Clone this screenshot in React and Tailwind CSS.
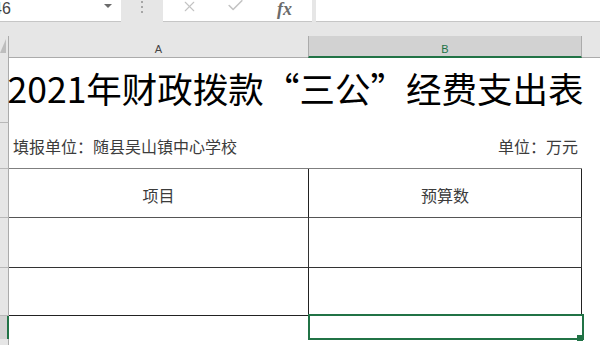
import React from "react";
import { X, Check } from "lucide-react";

const cjk = "font-['Noto_Sans_CJK_SC',sans-serif]";

const Dots = () => (
  <div className="flex w-[42px] flex-col items-center gap-[3px] pt-[1px]">
    <span className="h-[2px] w-[2px] bg-[#a6a6a6]" />
    <span className="h-[2px] w-[2px] bg-[#a6a6a6]" />
    <span className="h-[2px] w-[2px] bg-[#a6a6a6]" />
  </div>
);

const FormulaBar = () => (
  <div className="flex h-[22px] bg-[#e6e6e6]">
    <div className="flex h-[22px] w-[121px] items-start justify-between overflow-hidden border-b border-[#c6c6c6] bg-white">
      <span className="-ml-[7px] -mt-[3px] font-['Liberation_Sans',sans-serif] text-[16px] text-[#444]">46</span>
      <svg width="8" height="5" viewBox="0 0 8 5" className="mr-[9px] mt-[4px]">
        <path d="M0 0 L8 0 L4 4 Z" fill="#6b6b6b" />
      </svg>
    </div>
    <Dots />
    <div className="flex h-[22px] w-[149px] items-start border-b border-[#c6c6c6] bg-white">
      <X size={17} strokeWidth={1.5} color="#c3c3c3" className="ml-[18px] -mt-[2px]" />
      <Check size={19} strokeWidth={2} color="#c3c3c3" className="ml-[28px] -mt-[4px]" />
      <span className="ml-[32px] -mt-[4px] font-['Liberation_Serif',serif] text-[18px] font-bold italic text-[#6b6b6b]">fx</span>
    </div>
    <div className="w-[4px]" />
    <div className="h-[22px] flex-1 border-b border-[#c6c6c6] bg-white" />
  </div>
);

const ColumnHeaders = () => (
  <div className="flex h-[22px] font-['Liberation_Sans',sans-serif] text-[11px]">
    <div className="flex w-[9px] items-start border-r border-[#ababab] bg-[#e6e6e6] pt-[3px]">
      <svg width="6" height="14" viewBox="0 0 6 14">
        <path d="M6 0 L6 14 L0 14 Z" fill="#bdbdbd" />
      </svg>
    </div>
    <div className="flex w-[299px] items-center justify-center border-b border-[#ababab] bg-[#e6e6e6] pt-[6px] text-[#444]">
      A
    </div>
    <div className="flex w-[274px] items-center justify-center border-x border-b-2 border-x-[#ababab] border-b-[#217346] bg-[#d2d2d2] pt-[6px] text-[#217346]">
      B
    </div>
    <div className="flex-1 border-b border-[#ababab] bg-[#e6e6e6]" />
  </div>
);

const RowHead = ({ selected }) =>
  selected ? (
    <div className="w-[9px] border-r-2 border-[#217346] bg-[#d2d2d2]" />
  ) : (
    <div className="w-[9px] border-b border-r border-b-[#b8b8b8] border-r-[#ababab] bg-[#e6e6e6]" />
  );

const Q = ({ children }) => <span className="[font-feature-settings:'fwid']">{children}</span>;

export default function App() {
  return (
    <div className="h-[345px] w-[600px] overflow-hidden bg-[#e6e6e6]">
      <FormulaBar />
      <div className="h-[14px]" />
      <ColumnHeaders />

      <div className={`bg-white ${cjk}`}>
        {/* row 1: title */}
        <div className="flex h-[65px]">
          <RowHead />
          <div className="flex w-[573px] items-center justify-center whitespace-nowrap pb-[5px] text-[35.5px] text-black">
            2021年财政拨款<Q>“</Q>三公<Q>”</Q>经费支出表
          </div>
        </div>

        {/* row 2 */}
        <div className="flex h-[46px] text-[16px] text-[#3c3c3c]">
          <RowHead />
          <div className="flex w-[300px] items-center border-b border-[#7f7f7f] pl-[4px] pt-[1px]">
            填报单位：随县吴山镇中心学校
          </div>
          <div className="flex w-[273px] items-center justify-end border-b border-[#7f7f7f] pr-[4px] pt-[1px]">
            单位：万元
          </div>
        </div>

        {/* row 3: table header */}
        <div className="flex h-[49px] text-[16px] text-[#3c3c3c]">
          <RowHead />
          <div className="flex w-[300px] items-center justify-center border-b border-r border-b-[#555] border-r-[#222] pt-[4px]">
            项目
          </div>
          <div className="flex w-[273px] items-center justify-center border-b border-r border-b-[#555] border-r-[#222] pt-[4px]">
            预算数
          </div>
        </div>

        {/* row 4 */}
        <div className="flex h-[50px]">
          <RowHead />
          <div className="w-[300px] border-b border-r border-[#333]" />
          <div className="w-[273px] border-b border-r border-[#333]" />
        </div>

        {/* row 5 */}
        <div className="flex h-[48px]">
          <RowHead />
          <div className="w-[300px] border-b border-r border-[#222]" />
          <div className="w-[273px] border-b border-r border-[#222]" />
        </div>

        {/* row 6: selected */}
        <div className="flex h-[23px]">
          <RowHead selected />
          <div className="w-[300px]" />
          <div className="relative w-[273px]">
            <div className="absolute -left-[1px] -top-[2px] h-[26px] w-[276px] border-2 border-[#217346]" />
            <div className="absolute left-[268px] top-[19px] h-[6px] w-[6px] bg-[#217346]" />
          </div>
        </div>

        {/* row 7 */}
        <div className="flex h-[20px]">
          <RowHead />
        </div>
      </div>
    </div>
  );
}
